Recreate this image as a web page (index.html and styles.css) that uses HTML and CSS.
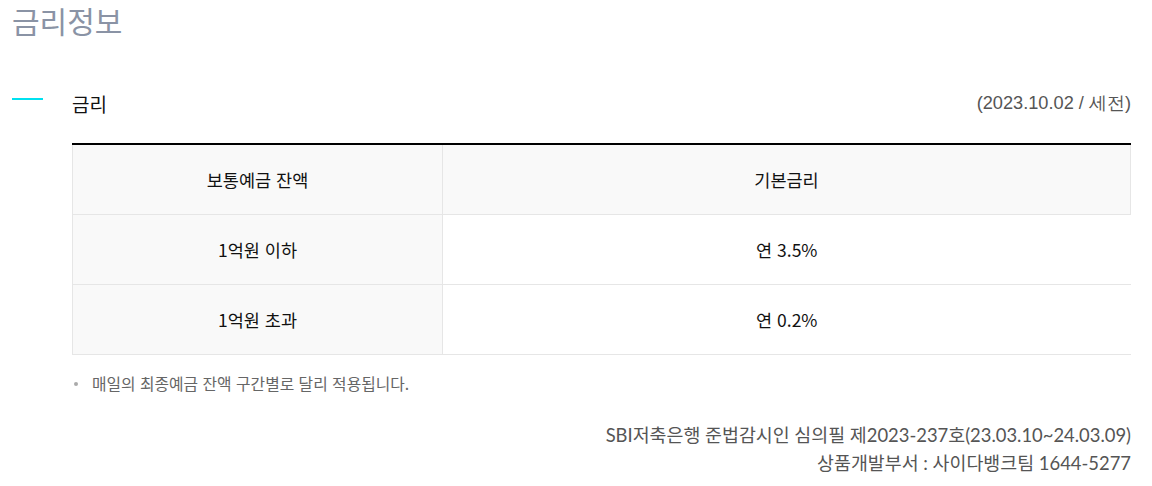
FILE: index.html
```html
<!DOCTYPE html>
<html lang="ko">
<head>
    <meta charset="UTF-8">
    <title>금리정보</title>
    <link rel="stylesheet" href="styles.css">
</head>
<body>
    <h2 class="page-title">금리정보</h2>

    <div class="section">
        <div class="section-head">
            <span class="bar"></span>
            <h3 class="section-title">금리</h3>
            <span class="base-date">(2023.10.02 / 세전)</span>
        </div>

        <table class="rate-table">
            <thead>
                <tr>
                    <th>보통예금 잔액</th>
                    <th>기본금리</th>
                </tr>
            </thead>
            <tbody>
                <tr>
                    <th>1억원 이하</th>
                    <td>연 3.5%</td>
                </tr>
                <tr>
                    <th>1억원 초과</th>
                    <td>연 0.2%</td>
                </tr>
            </tbody>
        </table>

        <ul class="notes">
            <li>매일의 최종예금 잔액 구간별로 달리 적용됩니다.</li>
        </ul>

        <div class="review">
            <p>SBI저축은행 준법감시인 심의필 제2023-237호(23.03.10~24.03.09)</p>
            <p>상품개발부서 : 사이다뱅크팀 1644-5277</p>
        </div>
    </div>
</body>
</html>
```

FILE: styles.css
```css
body {
    margin: 0;
    padding: 0 21px 0 12px;
    font-family: "Noto Sans CJK KR", "Noto Sans", sans-serif;
    color: #111;
    background: #fff;
}

/* Page title */
.page-title {
    margin: 0;
    font-size: 30px;
    font-weight: 400;
    line-height: 40px;
    color: #8a93a5;
}

/* Section header */
.section { margin-top: 48px; }
.section-head {
    display: flex;
    align-items: flex-start;
}
.bar {
    width: 31px;
    height: 2px;
    background-color: #00e1f0;
    margin-top: 10px;
}
.section-title {
    margin: 4px 0 0 29px;
    font-size: 19px;
    font-weight: 400;
    line-height: 24px;
    color: #111;
}
.base-date {
    margin: 4px 0 0 auto;
    font-family: "Liberation Sans", Arial, sans-serif;
    font-size: 18.2px;
    line-height: 22px;
    color: #555;
}

/* Rate table */
.rate-table {
    width: calc(100% - 60px);
    margin: 27px 0 0 60px;
    border-collapse: collapse;
    border-top: 2px solid #000;
    font-size: 17.5px;
}
.rate-table th,
.rate-table td {
    height: 69px;
    padding: 0;
    font-weight: 400;
    text-align: center;
    border-bottom: 1px solid #e6e6e6;
}
.rate-table th { background-color: #f9f9f9; }
.rate-table thead th:first-child,
.rate-table tbody th {
    width: 369px;
    border-left: 1px solid #e6e6e6;
    border-right: 1px solid #e6e6e6;
}
.rate-table thead th:last-child { border-right: 1px solid #e6e6e6; }
.rate-table td { background-color: #fff; }

/* Notes */
.notes {
    margin: 17px 0 0 60px;
    padding: 0;
    list-style: none;
    font-size: 15.8px;
    color: #666;
}
.notes li { position: relative; padding-left: 20px; }
.notes li::before {
    content: "";
    position: absolute;
    left: 2px;
    top: 10px;
    width: 4px;
    height: 4px;
    border-radius: 50%;
    background: #aaa;
}

/* Review number */
.review {
    margin-top: 26px;
    text-align: right;
    font-family: Lato, "Noto Sans CJK KR", sans-serif;
    font-size: 18.4px;
    color: #555;
}
.review p { margin: 0; line-height: 28px; }
```
